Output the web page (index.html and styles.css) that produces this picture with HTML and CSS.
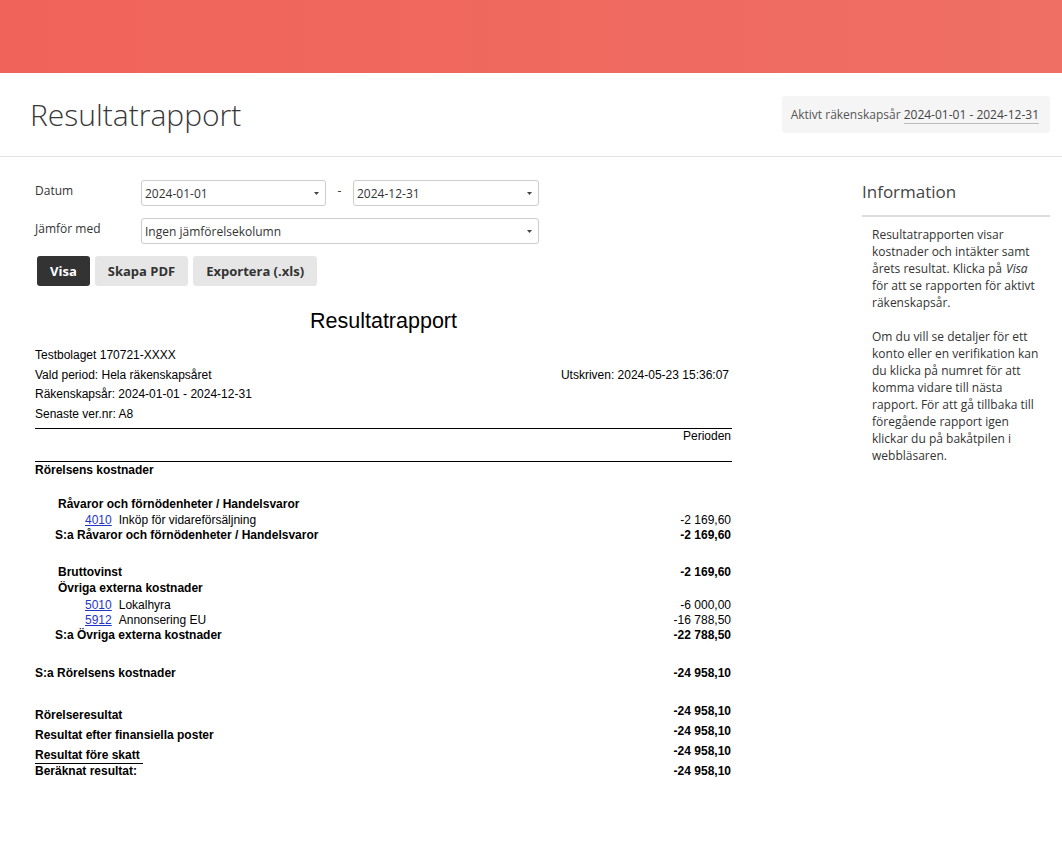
FILE: index.html
```html
<!DOCTYPE html>
<html lang="sv">
<head>
<meta charset="utf-8">
<title>Resultatrapport</title>
<link rel="stylesheet" href="styles.css">
</head>
<body>
<div class="topbar"></div>
<header class="pagehead">
  <h1>Resultatrapport</h1>
  <div class="fiscal">Aktivt räkenskapsår <span class="range">2024-01-01 - 2024-12-31</span></div>
</header>
<div class="content">
  <main class="main">
    <div class="form-row">
      <div class="form-label">Datum</div>
      <div class="select date"><span>2024-01-01</span><svg class="caret" width="5" height="3" viewBox="0 0 5 3"><path d="M0 0h5L2.5 3z" fill="#444"/></svg></div>
      <div class="dash">-</div>
      <div class="select date2"><span>2024-12-31</span><svg class="caret" width="5" height="3" viewBox="0 0 5 3"><path d="M0 0h5L2.5 3z" fill="#444"/></svg></div>
    </div>
    <div class="form-row">
      <div class="form-label">Jämför med</div>
      <div class="select wide"><span>Ingen jämförelsekolumn</span><svg class="caret" width="5" height="3" viewBox="0 0 5 3"><path d="M0 0h5L2.5 3z" fill="#444"/></svg></div>
    </div>
    <div class="buttons">
      <button class="btn primary">Visa</button>
      <button class="btn">Skapa PDF</button>
      <button class="btn">Exportera (.xls)</button>
    </div>

    <section class="report">
      <h2 class="rep-title">Resultatrapport</h2>
      <div class="meta">
        <div class="r"><span>Testbolaget 170721-XXXX</span></div>
        <div class="r"><span>Vald period: Hela räkenskapsåret</span><span class="printed">Utskriven: 2024-05-23 15:36:07</span></div>
        <div class="r"><span>Räkenskapsår: 2024-01-01 - 2024-12-31</span></div>
        <div class="r"><span>Senaste ver.nr: A8</span></div>
      </div>
      <div class="colhead">Perioden</div>

      <div class="r b lh14 pt1">Rörelsens kostnader</div>

      <div class="r b grp lh17 mt19">Råvaror och förnödenheter / Handelsvaror</div>
      <div class="r acc lh15"><span><a href="#" class="accno">4010</a>Inköp för vidareförsäljning</span><span>-2&nbsp;169,60</span></div>
      <div class="r b sum lh14"><span>S:a Råvaror och förnödenheter / Handelsvaror</span><span>-2&nbsp;169,60</span></div>

      <div class="r b grp lh16 mt22"><span>Bruttovinst</span><span>-2&nbsp;169,60</span></div>
      <div class="r b grp lh17">Övriga externa kostnader</div>
      <div class="r acc lh16"><span><a href="#" class="accno">5010</a>Lokalhyra</span><span>-6&nbsp;000,00</span></div>
      <div class="r acc lh15"><span><a href="#" class="accno">5912</a>Annonsering EU</span><span>-16&nbsp;788,50</span></div>
      <div class="r b sum lh15"><span>S:a Övriga externa kostnader</span><span>-22&nbsp;788,50</span></div>

      <div class="r b lh16 mt22"><span>S:a Rörelsens kostnader</span><span>-24&nbsp;958,10</span></div>

      <div class="res b mt22"><span class="lbl">Rörelseresultat</span><span class="val">-24&nbsp;958,10</span></div>
      <div class="res b"><span class="lbl">Resultat efter finansiella poster</span><span class="val">-24&nbsp;958,10</span></div>
      <div class="res b"><span class="lbl underlined">Resultat före skatt</span><span class="val">-24&nbsp;958,10</span></div>
      <div class="r b lh14"><span>Beräknat resultat:</span><span>-24&nbsp;958,10</span></div>
    </section>
  </main>

  <aside class="aside">
    <h3>Information</h3>
    <div class="info">
      <p>Resultatrapporten visar kostnader och intäkter samt årets resultat. Klicka på <em class="em">Visa</em> för att se rapporten för aktivt räkenskapsår.</p>
      <p>Om du vill se detaljer för ett konto eller en verifikation kan du klicka på numret för att komma vidare till nästa rapport. För att gå tillbaka till föregående rapport igen klickar du på bakåtpilen i webbläsaren.</p>
    </div>
  </aside>
</div>
</body>
</html>
```

FILE: styles.css
```css
* { box-sizing: border-box; }

body {
  margin: 0;
  font-family: "Open Sans", "Liberation Sans", sans-serif;
  color: #333;
  background: #fff;
}

.topbar {
  height: 73px;
  background: linear-gradient(90deg, #f0635a, #ef6f64);
}

.pagehead {
  height: 84px;
  border-bottom: 1px solid #e3e3e3;
  display: flex;
  align-items: center;
  justify-content: space-between;
  padding: 0 12px 0 30px;
}

.pagehead h1 {
  margin: 0;
  font-size: 30px;
  font-weight: 300;
  line-height: 40px;
  color: #383838;
}

.fiscal {
  background: #f5f5f5;
  border-radius: 3px;
  padding: 9px 11px 9px 9px;
  font-size: 12px;
  line-height: 19px;
  color: #555;
}

.fiscal .range {
  border-bottom: 1px solid #bbb;
  color: #444;
}

.content {
  display: flex;
  justify-content: space-between;
  padding: 23px 12px 40px 35px;
}

.main { width: 697px; }
.aside { width: 188px; }

/* form */
.form-row {
  display: flex;
  align-items: center;
  height: 26px;
  margin-bottom: 12px;
}

.form-label {
  width: 106px;
  align-self: flex-start;
  padding-top: 2px;
  font-size: 12px;
  line-height: 18px;
  color: #333;
}

.select {
  height: 26px;
  border: 1px solid #ccc;
  border-radius: 3px;
  display: flex;
  align-items: center;
  justify-content: space-between;
  padding: 0 6px 0 3px;
  font-size: 12px;
  color: #333;
  background: #fff;
}

.select.date { width: 185px; }
.select.date2 { width: 186px; }
.select.wide { width: 398px; }

.dash {
  width: 27px;
  text-align: center;
  font-size: 12px;
  margin-top: -6px;
}

.caret { display: block; }

.buttons {
  display: flex;
  gap: 5px;
  margin: 2px 0 0 2px;
}

.btn {
  height: 30px;
  padding: 0 13px;
  border: 0;
  border-radius: 3px;
  font-family: inherit;
  font-weight: 700;
  font-size: 13px;
  background: #e6e6e6;
  color: #333;
}

.btn.primary {
  background: #333;
  color: #fff;
}

/* report */
.report {
  margin-top: 24px;
  font-family: "Liberation Sans", Arial, sans-serif;
  font-size: 12px;
  color: #000;
}

.rep-title {
  margin: 0;
  text-align: center;
  font-size: 21.5px;
  font-weight: 400;
  line-height: 23px;
}

.meta {
  margin-top: 13px;
  line-height: 19.67px;
}

.printed { padding-right: 2px; }

.colhead {
  margin-top: 3px;
  height: 34px;
  border-top: 1px solid #000;
  border-bottom: 1px solid #000;
  text-align: right;
  line-height: 15px;
  padding-right: 1px;
}

.r {
  display: flex;
  justify-content: space-between;
  padding-right: 1px;
}

.b { font-weight: 700; }

.lh14 { line-height: 14px; }
.lh15 { line-height: 15px; }
.lh16 { line-height: 16px; }
.lh17 { line-height: 17px; }
.pt1 { padding-top: 1px; }
.mt19 { margin-top: 19px; }
.mt22 { margin-top: 22px; }

.grp { padding-left: 23px; }
.sum { padding-left: 20px; }
.acc { padding-left: 50px; }

.accno {
  color: #1f35c4;
  text-decoration: underline;
  margin-right: 7px;
}

.res {
  display: flex;
  justify-content: space-between;
  align-items: flex-start;
  padding-right: 1px;
}

.res .val { line-height: 16px; }

.res .lbl {
  margin-top: 4px;
  line-height: 16px;
}

.res .lbl.underlined {
  display: inline-block;
  border-bottom: 1px solid #000;
  padding-right: 3px;
}

/* aside */
.aside h3 {
  margin: 0;
  font-size: 17px;
  font-weight: 400;
  line-height: 24px;
  color: #444;
  padding-bottom: 11px;
  border-bottom: 2px solid #ddd;
}

.info {
  padding: 9px 8px 0 10px;
  font-size: 12px;
  line-height: 17px;
  color: #333;
}

.info p { margin: 0 0 17px; }

.em { padding-left: 1px; }
```
